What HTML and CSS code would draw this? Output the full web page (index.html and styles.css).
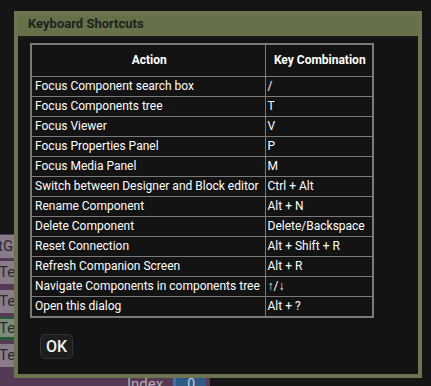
FILE: index.html
```html
<!DOCTYPE html>
<html>
<head>
<meta charset="utf-8">
<link rel="stylesheet" href="styles.css">
</head>
<body>
<div class="stage">
  <div class="panel">
    <div class="items">
      <div class="item item-first"><span>tG</span></div>
      <div class="item"><span>Tet</span></div>
      <div class="item item-gap"><span>Tet</span></div>
      <div class="item item-green"><span>Tet</span></div>
      <div class="item item-gap2"><span>Tet</span></div>
    </div>
    <div class="prop-row">
      <span class="prop-label">Index</span>
      <span class="prop-box">0</span>
    </div>
  </div>
</div>

<div class="dialog">
  <div class="dialog-title">Keyboard Shortcuts</div>
  <div class="dialog-body">
    <table class="shortcuts">
      <colgroup><col class="col-action"><col class="col-key"></colgroup>
      <thead>
        <tr><th>Action</th><th>Key Combination</th></tr>
      </thead>
      <tbody>
        <tr><td>Focus Component search box</td><td>/</td></tr>
        <tr><td>Focus Components tree</td><td>T</td></tr>
        <tr><td>Focus Viewer</td><td>V</td></tr>
        <tr><td>Focus Properties Panel</td><td>P</td></tr>
        <tr><td>Focus Media Panel</td><td>M</td></tr>
        <tr><td>Switch between Designer and Block editor</td><td>Ctrl + Alt</td></tr>
        <tr><td>Rename Component</td><td>Alt + N</td></tr>
        <tr><td>Delete Component</td><td>Delete/Backspace</td></tr>
        <tr><td>Reset Connection</td><td>Alt + Shift + R</td></tr>
        <tr><td>Refresh Companion Screen</td><td>Alt + R</td></tr>
        <tr><td>Navigate Components in components tree</td><td>↑/↓</td></tr>
        <tr><td>Open this dialog</td><td>Alt + ?</td></tr>
      </tbody>
    </table>
    <div class="actions">
      <button class="ok-btn">OK</button>
    </div>
  </div>
</div>
</body>
</html>
```

FILE: styles.css
```css
html, body {
  margin: 0;
  padding: 0;
}
body {
  width: 431px;
  height: 386px;
  overflow: hidden;
  background: #151515;
  font-family: Roboto, "Liberation Sans", sans-serif;
  position: relative;
}
.stage {
  height: 386px;
  padding-top: 234px;
  box-sizing: border-box;
}
.panel {
  width: 210px;
  height: 152px;
  background: #553a55;
  display: flex;
  flex-direction: column;
}
.items {
  display: flex;
  flex-direction: column;
  width: 14px;
}
.item {
  height: 23px;
  background: #8a7a8a;
  margin-top: 3px;
  overflow: hidden;
  font-size: 15px;
  line-height: 23px;
  color: #2a2a2a;
  white-space: nowrap;
}
.item span {
  display: block;
  margin-left: -1px;
}
.item-first {
  margin-top: 1px;
}
.item-first span {
  margin-left: -2px;
}
.item-gap {
  margin-top: 6px;
}
.item-green {
  margin-top: 4px;
  background: #7d8a7d;
  border-top: 2px solid #245a36;
  border-bottom: 3px solid #245a36;
  height: 18px;
  line-height: 18px;
}
.item-gap2 {
  margin-top: 4px;
}
.prop-row {
  margin-top: auto;
  display: flex;
  align-items: flex-start;
  height: 9px;
  overflow: visible;
}
.prop-label {
  margin-left: 127px;
  font-size: 15px;
  line-height: 15px;
  color: #b5aab5;
}
.prop-box {
  margin-left: 10px;
  width: 33px;
  height: 14px;
  background: #2e5a86;
  color: #ccc;
  font-size: 14px;
  line-height: 14px;
  text-align: center;
  box-sizing: border-box;
  border-left: 3px solid #3c74aa;
}

.dialog {
  position: absolute;
  left: 14px;
  top: 11px;
  width: 408px;
  height: 367px;
  box-sizing: border-box;
  border: 4px solid #6b7650;
  background: #131313;
  display: flex;
  flex-direction: column;
}
.dialog-title {
  height: 21px;
  line-height: 17px;
  padding: 0 10px;
  background: #66714a;
  color: #1d211d;
  font-weight: bold;
  font-size: 13px;
}
.dialog-body {
  padding: 7px 12px 0 12px;
  flex: 1;
  background: linear-gradient(#1c1c1c, #131313 4px);
}
.shortcuts {
  border-collapse: collapse;
  table-layout: fixed;
  width: 342px;
  border: 2px solid #7a7a7a;
  color: #ffffff;
  font-size: 12px;
}
.col-action {
  width: 234px;
}
.col-key {
  width: 108px;
}
.shortcuts th, .shortcuts td {
  border: 1px solid #7a7a7a;
  padding: 0 1px 0 3px;
  height: 19px;
  line-height: 15px;
  text-align: left;
  white-space: nowrap;
  overflow: hidden;
}
.shortcuts td + td {
  padding-left: 2px;
}
.shortcuts th {
  height: 31px;
  font-weight: bold;
  text-align: center;
}
.actions {
  display: flex;
  padding: 16px 0 0 10px;
}
.ok-btn {
  width: 33px;
  height: 25px;
  padding: 0;
  background: #1e1e1e;
  border: 1px solid #333;
  border-radius: 5px;
  color: #f2f2f2;
  font-family: Roboto, "Liberation Sans", sans-serif;
  font-weight: 500;
  font-size: 16px;
}
```
